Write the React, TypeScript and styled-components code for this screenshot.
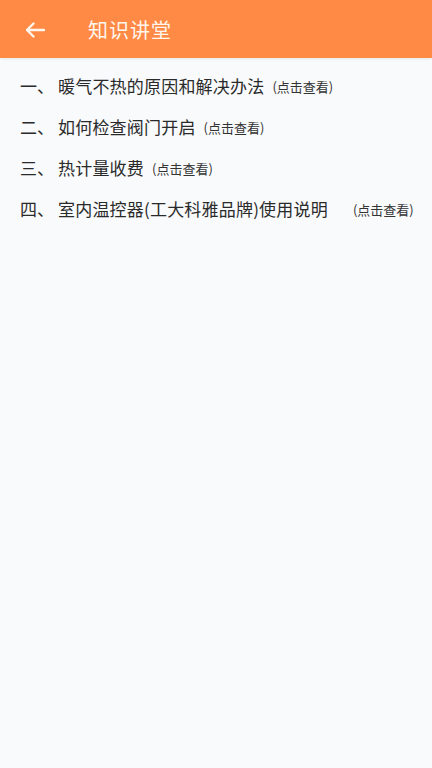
import styled, { createGlobalStyle } from 'styled-components'

const GlobalStyle = createGlobalStyle`
  html, body {
    margin: 0;
    padding: 0;
    background: #f9fafc;
  }
  body {
    font-family: "Noto Sans CJK SC", "Noto Sans", sans-serif;
  }
`

type Lesson = {
  index: string,
  title: string,
  wide?: boolean,
}

const lessons: Array<Lesson> = [
  { index: '一、', title: '暖气不热的原因和解决办法' },
  { index: '二、', title: '如何检查阀门开启' },
  { index: '三、', title: '热计量收费' },
  { index: '四、', title: '室内温控器(工大科雅品牌)使用说明', wide: true },
]

const BackArrow = () => (
  <svg width="22" height="16" viewBox="0 0 22 16" fill="none">
    <path
      d="M20 8H3M9.5 1.5L3 8l6.5 6.5"
      stroke="#fff6ee"
      strokeWidth="2.4"
      strokeLinecap="round"
      strokeLinejoin="round"
    />
  </svg>
)

export default function App() {
  return (
    <Page>
      <GlobalStyle />
      <Header>
        <BackButton>
          <BackArrow />
        </BackButton>
        <Title>知识讲堂</Title>
      </Header>

      <List>
        {lessons.map(({ index, title, wide }, i) => (
          <Row key={i}>
            <Index>{index}</Index>
            <RowTitle>{title}</RowTitle>
            <Hint $wide={wide}>(点击查看)</Hint>
          </Row>
        ))}
      </List>
    </Page>
  )
}

const Page = styled.div`
  min-height: 768px;
  background: #f9fafc;
`

const Header = styled.div`
  display: flex;
  align-items: center;
  height: 58px;
  background: #ff8a45;
  box-shadow: 0 1px 3px rgba(0, 0, 0, 0.08);
`

const BackButton = styled.div`
  display: flex;
  align-items: center;
  justify-content: center;
  width: 44px;
  margin-left: 13px;
  margin-top: 2px;
`

const Title = styled.div`
  margin-left: 31px;
  font-size: 20px;
  color: #fff6ee;
  letter-spacing: 1px;
`

const List = styled.div`
  display: flex;
  flex-direction: column;
  padding-top: 7px;
`

const Row = styled.div`
  display: flex;
  align-items: center;
  height: 41px;
  padding-left: 20px;
  color: #2a2a2a;
`

const Index = styled.span`
  font-size: 17px;
  width: 38px;
`

const RowTitle = styled.span`
  font-size: 17px;
  letter-spacing: 0.2px;
`

const Hint = styled.span<{ $wide?: boolean }>`
  font-size: 13px;
  margin-left: ${p => (p.$wide ? '25px' : '8px')};
  margin-top: 2px;
  color: #333;
`
